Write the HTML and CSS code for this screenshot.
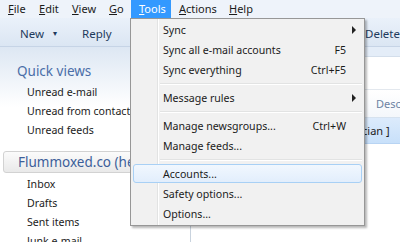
FILE: index.html
```html
<!DOCTYPE html>
<html>
<head>
    <title>Mail - Tools menu</title>
    <link rel="stylesheet" href="styles.css">
</head>
<body>
    <div class="window">
        <div class="menubar">
            <span class="menu-title"><u>F</u>ile</span>
            <span class="menu-title"><u>E</u>dit</span>
            <span class="menu-title"><u>V</u>iew</span>
            <span class="menu-title"><u>G</u>o</span>
            <span class="menu-title open"><u>T</u>ools</span>
            <span class="menu-title"><u>A</u>ctions</span>
            <span class="menu-title"><u>H</u>elp</span>
        </div>

        <div class="toolbar">
            <span class="tool">New <span class="caret">&#9662;</span></span>
            <span class="tool">Reply</span>
            <span class="spacer"></span>
            <span class="tool">Delete</span>
        </div>

        <div class="main">
            <div class="folders">
                <div class="section-title">Quick views</div>
                <div class="folder">Unread e-mail</div>
                <div class="folder">Unread from contacts</div>
                <div class="folder">Unread feeds</div>

                <div class="account">Flummoxed.co (help@flummoxed.co)</div>
                <div class="folder">Inbox</div>
                <div class="folder">Drafts</div>
                <div class="folder">Sent items</div>
                <div class="folder">Junk e-mail</div>
            </div>

            <div class="messages">
                <div class="strip"></div>
                <div class="search"></div>
                <div class="list-header"><span class="col-from">From</span><span>Description</span></div>
                <div class="row selected"><span class="col-flag"></span><span>[ Mailing list for technician ]</span></div>
                <div class="row"></div>
            </div>
        </div>

        <div class="dropdown">
            <div class="item"><span>Sync</span><span class="arrow"></span></div>
            <div class="item"><span>Sync all e-mail accounts</span><span class="key">F5</span></div>
            <div class="item"><span>Sync everything</span><span class="key">Ctrl+F5</span></div>
            <div class="sep"></div>
            <div class="item"><span>Message rules</span><span class="arrow"></span></div>
            <div class="sep"></div>
            <div class="item"><span>Manage newsgroups...</span><span class="key">Ctrl+W</span></div>
            <div class="item"><span>Manage feeds...</span></div>
            <div class="sep"></div>
            <div class="item hover"><span>Accounts...</span></div>
            <div class="item"><span>Safety options...</span></div>
            <div class="item"><span>Options...</span></div>
        </div>
    </div>
</body>
</html>
```

FILE: styles.css
```css
body {
    margin: 0;
    font-family: "Noto Sans", "Open Sans", sans-serif;
    font-size: 10.6px;
    color: #1b1b1b;
}
.window {
    position: relative;
    width: 400px;
    height: 242px;
    overflow: hidden;
    background: #fff;
}
.menubar {
    display: grid;
    grid-template-columns: 31px 33px 37px 30px 40px 50px 40px;
    height: 18px;
    background: #eef3fa;
    font-size: 11px;
    line-height: 18px;
}
.menu-title {
    padding-left: 8px;
}
.menu-title.open {
    background: #3399ff;
    color: #fff;
}
.toolbar {
    display: flex;
    align-items: center;
    height: 25px;
    padding: 3px 0 0 20px;
    background: linear-gradient(#eaf1fa, #dbe6f3);
    border-bottom: 1px solid #c6d4e6;
    color: #1e3a5c;
    font-size: 11.5px;
}
.tool {
    margin-right: 25px;
}
.tool:last-child {
    margin-right: 0;
    padding-left: 4px;
}
.caret {
    font-size: 8px;
    margin-left: 6px;
    vertical-align: 2px;
}
.spacer {
    flex: 1;
}
.main {
    display: flex;
    height: 195px;
}
.folders {
    width: 190px;
    border-right: 1px solid #c9d3de;
    background: linear-gradient(#dde7f3, #fff 60px);
    padding-top: 13px;
    overflow: hidden;
    white-space: nowrap;
}
.section-title {
    padding-left: 17px;
    font-size: 13.5px;
    line-height: 22px;
    color: #4a6ea8;
    margin-bottom: 1px;
}
.folder {
    padding-left: 27px;
    line-height: 19px;
}
.account {
    margin: 11px 0 2px 3px;
    padding-left: 14px;
    height: 20px;
    line-height: 20px;
    font-size: 13.5px;
    color: #3d5f9a;
    background: linear-gradient(#fbfbfb, #e9e9e9);
    border: 1px solid #d2d2d2;
    border-radius: 3px 0 0 3px;
}
.messages {
    flex: 1;
    display: flex;
    flex-direction: column;
    white-space: nowrap;
    overflow: hidden;
}
.strip {
    height: 9px;
    background: #e4edf8;
    border-bottom: 1px solid #d3deeb;
}
.search {
    height: 32px;
}
.list-header {
    display: flex;
    height: 27px;
    align-items: center;
    border-top: 1px solid #e3e8ee;
    border-bottom: 1px solid #d6e2ef;
    background: linear-gradient(#fff, #f4f7fb);
    color: #6d83a3;
    font-size: 11px;
}
.list-header span,
.row span {
    flex-shrink: 0;
}
.col-from {
    width: 177px;
    padding-left: 8px;
}
.col-flag {
    width: 56px;
}
.row {
    display: flex;
    height: 25px;
    align-items: center;
    font-size: 11px;
}
.row.selected {
    background: linear-gradient(#dcebfc, #c8e0fa);
    border-bottom: 1px solid #b8d4f3;
}
.dropdown {
    position: absolute;
    left: 130px;
    top: 18px;
    width: 229px;
    padding: 1px 2px 1px;
    background: linear-gradient(90deg, #f1f1f1 26px, #e2e3e3 26px, #e2e3e3 27px, #fff 27px, #fff 28px, #f1f1f1 28px);
    border: 1px solid #979797;
    box-shadow: 2px 2px 2px rgba(0, 0, 0, 0.28);
}
.item {
    display: flex;
    align-items: center;
    height: 20px;
    padding: 0 5px 0 29px;
    box-sizing: border-box;
    border: 1px solid transparent;
    border-radius: 3px;
}
.item span:first-child {
    flex: 1;
}
.item.hover {
    height: 19px;
    margin-bottom: 1px;
    background: linear-gradient(#f1f7fe, #e2eefc);
    border-color: #a8d0f5;
}
.key {
    margin-right: 10px;
}
.arrow {
    width: 0;
    height: 0;
    border-top: 4px solid transparent;
    border-bottom: 4px solid transparent;
    border-left: 4px solid #222;
}
.sep {
    height: 1px;
    margin: 3px 0 3px 27px;
    background: #e2e3e3;
    border-bottom: 1px solid #fff;
}
```
